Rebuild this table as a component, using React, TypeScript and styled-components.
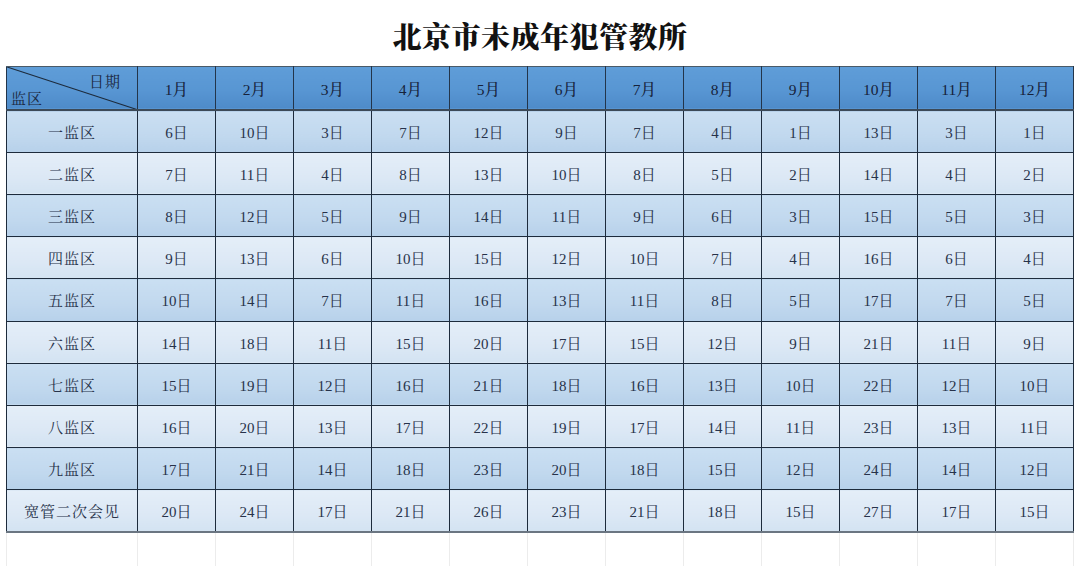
import React from "react";
import styled, { createGlobalStyle } from "styled-components";

const Global = createGlobalStyle`
  html, body { margin: 0; padding: 0; background: #ffffff; }
  body { font-family: "Liberation Serif", "Noto Serif CJK SC", "Noto Sans CJK SC", serif; }
`;

const Page = styled.div`
  width: 1080px;
  height: 566px;
  overflow: hidden;
  background: #fff;
  display: flex;
  flex-direction: column;
`;

const Title = styled.h1`
  margin: 0;
  height: 69px;
  display: flex;
  align-items: center;
  justify-content: center;
  padding-top: 5px;
  box-sizing: border-box;
  font-family: "Noto Serif CJK SC", "Noto Sans CJK SC", serif;
  font-size: 29px;
  font-weight: 900;
  color: #111;
  letter-spacing: 0.5px;
`;

const Table = styled.table`
  margin-left: 6px;
  border-collapse: collapse;
  table-layout: fixed;
  width: 1067px;
`;

const Col = styled.col<{ $w: number }>`
  width: ${(p) => p.$w}px;
`;

const HeadRow = styled.tr`
  height: 44px;
`;

const HeadCell = styled.th`
  background: linear-gradient(180deg, #5f9dd8 0%, #5896d3 55%, #4e8bc9 100%);
  border: 1.5px solid #23354a;
  border-top-color: #4a5a68;
  border-bottom: 2px solid #3c4a58;
  font-family: "Liberation Serif", "Noto Serif CJK SC", "Noto Sans CJK SC", serif;
  font-size: 15.5px;
  font-weight: 500;
  color: #16223a;
  text-align: center;
  padding: 0;
`;

const CornerCell = styled(HeadCell)`
  position: relative;
  font-weight: 400;
`;

const Diagonal = styled.svg`
  position: absolute;
  inset: 0;
  width: 100%;
  height: 100%;
`;

const CornerTop = styled.span`
  position: absolute;
  right: 16px;
  top: 3px;
  font-family: "Noto Serif CJK SC", "Noto Sans CJK SC", serif;
  font-size: 15px;
  color: #1a2740;
  letter-spacing: 1px;
`;

const CornerBottom = styled.span`
  position: absolute;
  left: 4px;
  bottom: 1px;
  font-family: "Noto Serif CJK SC", "Noto Sans CJK SC", serif;
  font-size: 15px;
  color: #1a2740;
  letter-spacing: 1px;
`;

const BodyRow = styled.tr`
  height: 42.2px;
`;

const Cell = styled.td<{ $dark: boolean }>`
  background: ${(p) =>
    p.$dark
      ? "linear-gradient(180deg, #cadff2 0%, #c1d8ee 60%, #b7d1ea 100%)"
      : "linear-gradient(180deg, #e4eef8 0%, #dce8f5 60%, #d3e3f2 100%)"};
  border: 1.5px solid #1d2b3c;
  font-family: "Liberation Serif", "Noto Serif CJK SC", "Noto Sans CJK SC", serif;
  font-size: 15px;
  color: #27324a;
  text-align: center;
  padding: 0;
`;

const NameCell = styled(Cell)`
  font-family: "Noto Serif CJK SC", "Noto Sans CJK SC", serif;
  letter-spacing: 1px;
`;

const GhostRow = styled.tr`
  height: 34px;
`;

const GhostCell = styled.td`
  border-left: 1px solid #ececec;
  border-right: 1px solid #ececec;
  border-top: 2px solid #6b7682;
  padding: 0;
`;

const months = ["1月", "2月", "3月", "4月", "5月", "6月", "7月", "8月", "9月", "10月", "11月", "12月"];

const rows: [string, number[]][] = [
  ["一监区", [6, 10, 3, 7, 12, 9, 7, 4, 1, 13, 3, 1]],
  ["二监区", [7, 11, 4, 8, 13, 10, 8, 5, 2, 14, 4, 2]],
  ["三监区", [8, 12, 5, 9, 14, 11, 9, 6, 3, 15, 5, 3]],
  ["四监区", [9, 13, 6, 10, 15, 12, 10, 7, 4, 16, 6, 4]],
  ["五监区", [10, 14, 7, 11, 16, 13, 11, 8, 5, 17, 7, 5]],
  ["六监区", [14, 18, 11, 15, 20, 17, 15, 12, 9, 21, 11, 9]],
  ["七监区", [15, 19, 12, 16, 21, 18, 16, 13, 10, 22, 12, 10]],
  ["八监区", [16, 20, 13, 17, 22, 19, 17, 14, 11, 23, 13, 11]],
  ["九监区", [17, 21, 14, 18, 23, 20, 18, 15, 12, 24, 14, 12]],
  ["宽管二次会见", [20, 24, 17, 21, 26, 23, 21, 18, 15, 27, 17, 15]],
];

export default function App() {
  return (
    <Page>
      <Global />
      <Title>北京市未成年犯管教所</Title>
      <Table>
        <colgroup>
          <Col $w={131} />
          {months.map((m) => (
            <Col key={m} $w={78} />
          ))}
        </colgroup>
        <thead>
          <HeadRow>
            <CornerCell>
              <Diagonal viewBox="0 0 131 44" preserveAspectRatio="none">
                <line x1="0" y1="0" x2="131" y2="44" stroke="#1d2b3c" strokeWidth="1.2" />
              </Diagonal>
              <CornerTop>日期</CornerTop>
              <CornerBottom>监区</CornerBottom>
            </CornerCell>
            {months.map((m) => (
              <HeadCell key={m}>{m}</HeadCell>
            ))}
          </HeadRow>
        </thead>
        <tbody>
          {rows.map(([name, days], i) => {
            const dark = i % 2 === 0;
            return (
              <BodyRow key={name}>
                <NameCell $dark={dark}>{name}</NameCell>
                {days.map((d, j) => (
                  <Cell key={j} $dark={dark}>
                    {d}日
                  </Cell>
                ))}
              </BodyRow>
            );
          })}
          <GhostRow>
            {Array.from({ length: 13 }).map((_, i) => (
              <GhostCell key={i} />
            ))}
          </GhostRow>
        </tbody>
      </Table>
    </Page>
  );
}
